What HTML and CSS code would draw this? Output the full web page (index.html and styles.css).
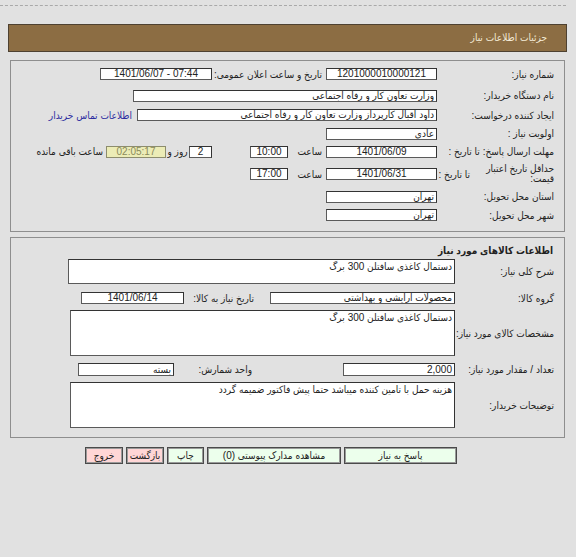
FILE: index.html
```html
<!DOCTYPE html>
<html lang="fa" dir="rtl">
<head>
<meta charset="utf-8">
<title>جزئیات اطلاعات نیاز</title>
<link rel="stylesheet" href="styles.css">
</head>
<body>
<div class="topline"></div>
<div class="header">جزئیات اطلاعات نیاز</div>

<div class="panel p1">
  <div class="row">
    <div class="lbl">شماره نیاز:</div>
    <span class="box w111 center ltr">1201000010000121</span>
    <span class="mid announce">تاریخ و ساعت اعلان عمومی:</span>
    <span class="box w112 center ltr">1401/06/07 - 07:44</span>
  </div>
  <div class="row">
    <div class="lbl">نام دستگاه خریدار:</div>
    <span class="box w304">وزارت تعاون کار و رفاه اجتماعی</span>
  </div>
  <div class="row">
    <div class="lbl">ایجاد کننده درخواست:</div>
    <span class="box w300">داود اقبال کارپرداز وزارت تعاون کار و رفاه اجتماعی</span>
    <a class="link" href="#">اطلاعات تماس خریدار</a>
  </div>
  <div class="row">
    <div class="lbl">اولویت نیاز :</div>
    <span class="box w111">عادی</span>
  </div>
  <div class="row">
    <div class="lbl nowrap">مهلت ارسال پاسخ: تا تاریخ :</div>
    <span class="box w111 center ltr">1401/06/09</span>
    <span class="mid w38">ساعت</span>
    <span class="box w38 center ltr">10:00</span>
    <span class="box w23 center ltr days">2</span>
    <span class="mid w22">روز و</span>
    <span class="box timer center ltr">02:05:17</span>
    <span class="mid remain">ساعت باقی مانده</span>
  </div>
  <div class="row">
    <div class="lbl split">
      <span class="twoline">حداقل تاریخ اعتبار<br>قیمت:</span>
      <span class="until">تا تاریخ :</span>
    </div>
    <span class="box w111 center ltr">1401/06/31</span>
    <span class="mid w38">ساعت</span>
    <span class="box w38 center ltr">17:00</span>
  </div>
  <div class="row">
    <div class="lbl">استان محل تحویل:</div>
    <span class="box w111">تهران</span>
  </div>
  <div class="row">
    <div class="lbl">شهر محل تحویل:</div>
    <span class="box w111">تهران</span>
  </div>
</div>

<div class="panel p2">
  <div class="title">اطلاعات کالاهای مورد نیاز</div>
  <div class="row r-area1">
    <div class="lbl">شرح کلی نیاز:</div>
    <div class="area a387 h25">دستمال کاغذی سافتلن 300 برگ</div>
  </div>
  <div class="row r-group">
    <div class="lbl">گروه کالا:</div>
    <span class="box w185">محصولات آرایشی و بهداشتی</span>
    <span class="mid needdate">تاریخ نیاز به کالا:</span>
    <span class="box w103 center ltr">1401/06/14</span>
  </div>
  <div class="row r-area2">
    <div class="lbl nowrap">مشخصات کالای مورد نیاز:</div>
    <div class="area a385 h46">دستمال کاغذی سافتلن 300 برگ</div>
  </div>
  <div class="row r-qty">
    <div class="lbl nowrap">تعداد / مقدار مورد نیاز:</div>
    <span class="box w112 tall ltr right">2,000</span>
    <span class="mid unitlbl">واحد شمارش:</span>
    <span class="box w96 tall">بسته</span>
  </div>
  <div class="row r-area3">
    <div class="lbl">توضیحات خریدار:</div>
    <div class="area a385 h46">هزینه حمل با تامین کننده میباشد حتما پیش فاکتور ضمیمه گردد</div>
  </div>
</div>

<div class="btns">
  <button class="btn green b113">پاسخ به نیاز</button>
  <button class="btn green b134">مشاهده مدارک پیوستی (0)</button>
  <button class="btn green b37">چاپ</button>
  <button class="btn pink b38">بازگشت</button>
  <button class="btn pink b38">خروج</button>
</div>
</body>
</html>
```
FILE: styles.css
```css
html, body {
  margin: 0;
  padding: 0;
}
body {
  background: #e1e1e1;
  font-family: "Liberation Sans", "DejaVu Sans Condensed", "DejaVu Sans", sans-serif;
  font-size: 10px;
  color: #222;
}
.topline {
  margin: 5px 10px 0 0;
  border-top: 1px dashed #a9a9a9;
}
.header {
  margin: 18px 9px 0 8px;
  height: 26px;
  line-height: 26px;
  border: 1px solid #4e4131;
  background: #8c6d43;
  color: #f3ead6;
  padding-right: 19px;
  font-size: 10px;
}
.panel {
  margin: 8px 11px 0 10px;
  border: 1px solid #8e8e8e;
}
.p1 {
  padding: 2px 10px 6px 0;
  display: grid;
  grid-template-rows: 22px 21px 18px 19px 17px 28px 17px 20px;
}
.p2 {
  margin-top: 5px;
  padding: 0 10px 9px 0;
}
.row {
  display: flex;
  align-items: center;
}
.lbl {
  width: 117px;
  flex: none;
  color: #222;
}
.p2 .lbl {
  width: 99px;
}
.nowrap {
  white-space: nowrap;
}
.split {
  display: flex;
  align-items: center;
}
.twoline {
  width: 66px;
  line-height: 10px;
  white-space: nowrap;
}
.until {
  margin-right: 18px;
  white-space: nowrap;
}
.box {
  box-sizing: border-box;
  height: 12px;
  line-height: 10px;
  background: #fff;
  border: 1px solid #5a5a5a;
  border-top-color: #333;
  border-right-color: #333;
  padding: 0 2px;
  white-space: nowrap;
  overflow: hidden;
  flex: none;
}
.box.tall {
  height: 13px;
  line-height: 11px;
}
.center { text-align: center; }
.right { text-align: right; }
.ltr { direction: ltr; }
.w111 { width: 111px; }
.w112 { width: 112px; }
.w304 { width: 304px; }
.w300 { width: 300px; }
.w38 { width: 38px; }
.w23 { width: 23px; }
.w22 { width: 22px; }
.w185 { width: 185px; }
.w103 { width: 103px; }
.w96 { width: 96px; }
.mid {
  flex: none;
  white-space: nowrap;
  box-sizing: border-box;
}
.mid.w38 { padding-right: 4px; }
.mid.w22 {
  width: 23px;
  text-align: center;
}
.announce {
  width: 114px;
  padding-right: 4px;
}
.days { margin-right: 38px; }
.timer {
  width: 60px;
  background: #ececb6;
  color: #8a8a5a;
  border-color: #8d8d6d;
}
.remain { padding-right: 3px; }
.link {
  color: #2d2da0;
  text-decoration: none;
  margin-right: 5px;
  white-space: nowrap;
}
.title {
  font-weight: bold;
  padding-top: 6px;
  line-height: 13px;
  padding-right: 1px;
}
.area {
  box-sizing: border-box;
  background: #fff;
  border: 1px solid #5a5a5a;
  border-top-color: #333;
  border-right-color: #333;
  padding: 1px 2px;
  line-height: 11px;
}
.a387 { width: 387px; }
.a385 { width: 385px; }
.h25 { height: 25px; }
.h46 { height: 46px; }
.r-area1 { margin-top: 2px; }
.r-group { margin-top: 8px; }
.r-area2 { margin-top: 6px; }
.r-qty { margin-top: 7px; }
.r-area3 { margin-top: 6px; }
.needdate {
  width: 86px;
  padding-right: 16px;
}
.unitlbl {
  width: 169px;
  padding-right: 91px;
}
.btns {
  display: flex;
  gap: 3px;
  margin: 9px 119px 0 0;
}
.btn {
  font: inherit;
  font-size: 10px;
  color: #222;
  height: 17px;
  padding: 0;
  border: 1px solid #4a4a4a;
  box-shadow: inset 0 0 0 1px #9a9a9a;
  cursor: pointer;
  white-space: nowrap;
}
.green { background: #ecffec; }
.pink { background: #ffd6d6; }
.b113 { width: 113px; }
.b134 { width: 134px; }
.b37 { width: 37px; }
.b38 { width: 38px; }
```
